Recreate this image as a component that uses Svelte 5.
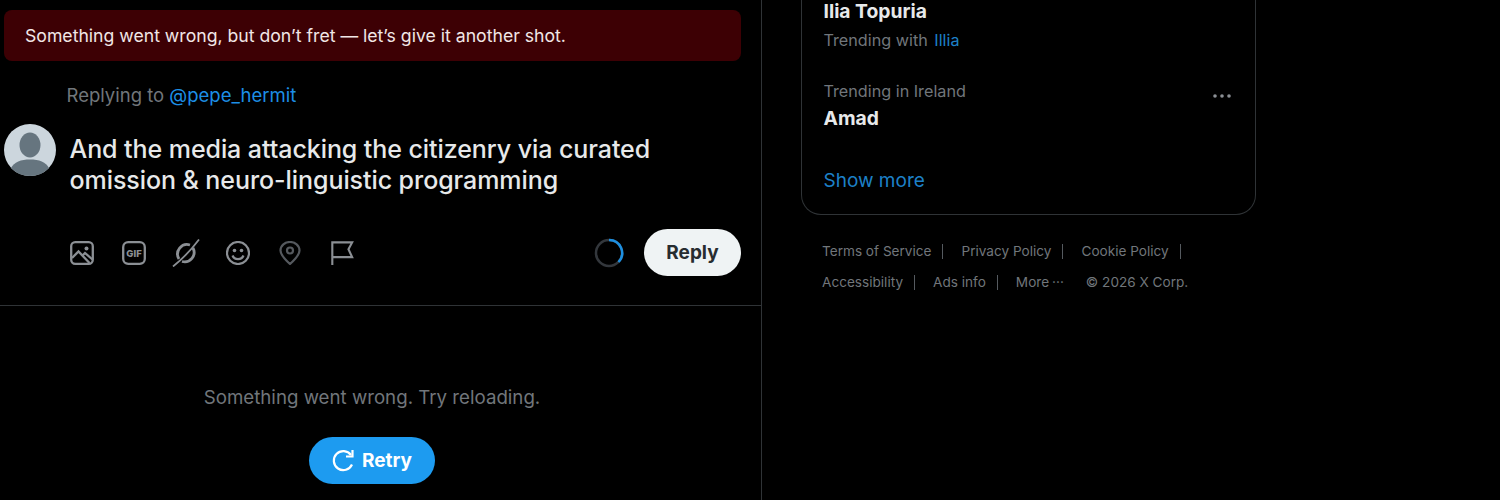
<script>
  const links = [
    { text: 'Terms of Service', sep: true },
    { text: 'Privacy Policy', sep: true },
    { text: 'Cookie Policy', sep: true },
    { text: 'Accessibility', sep: true },
    { text: 'Ads info', sep: true }
  ];
</script>

<div class="page">
  <main class="primary">
    <div class="banner">Something went wrong, but don’t fret — let’s give it another shot.</div>
    <div class="replying">Replying to <span class="blue">@pepe_hermit</span></div>

    <div class="compose">
      <svg class="avatar" viewBox="0 0 52 52" aria-hidden="true">
        <circle cx="26" cy="26" r="26" fill="#ccd6dd" />
        <ellipse cx="26" cy="21" rx="10.500" ry="12.500" fill="#66757f" />
        <path d="M7 44c3-6 10-8.500 19-8.500S42 38 45 44c-4.500 5-11.500 8-19 8S11.500 49 7 44z" fill="#66757f" />
      </svg>
      <div class="draft">And the media attacking the citizenry via curated omission &amp; neuro-linguistic programming</div>
    </div>

    <div class="toolbar">
      <div class="tools">
        <svg viewBox="0 0 24 24" fill="none" stroke="#8b8f94" stroke-width="2.300" aria-hidden="true">
          <rect x="1.200" y="1.200" width="21.600" height="21.600" rx="4" />
          <circle cx="16.500" cy="7.500" r="2" fill="#8b8f94" stroke="none" />
          <path d="M2 17l6.500-6.500 11 11.500M12.500 14.500l2.500-2.500 7.500 6.500" />
        </svg>
        <svg viewBox="0 0 24 24" fill="none" stroke="#8b8f94" stroke-width="2.300" aria-hidden="true">
          <rect x="1.200" y="1.200" width="21.600" height="21.600" rx="5" />
          <text x="12" y="15.700" class="gif">GIF</text>
        </svg>
        <svg class="wide" viewBox="0 0 28 28" fill="none" stroke="#8b8f94" aria-hidden="true">
          <path stroke-width="2.800" d="M21 9a9.500 9.500 0 0 1-11 13.500M7 20A9.500 9.500 0 0 1 18 6" />
          <path stroke-width="1.800" d="M1 27.500C9 21 20 10 27 .5" />
        </svg>
        <svg viewBox="0 0 24 24" fill="none" stroke="#8b8f94" stroke-width="2.200" aria-hidden="true">
          <circle cx="12" cy="12" r="11" />
          <circle cx="8.500" cy="9.500" r="1.800" fill="#8b8f94" stroke="none" />
          <circle cx="15.500" cy="9.500" r="1.800" fill="#8b8f94" stroke="none" />
          <path d="M6.500 14.500c1 2.500 3 3.700 5.500 3.700s4.500-1.200 5.500-3.700" />
        </svg>
        <svg viewBox="0 0 24 24" fill="none" stroke="#55595e" stroke-width="2.200" aria-hidden="true">
          <path d="M12 23c-5-4.500-9.500-9-9.500-13.500C2.500 4.500 7 1 12 1s9.500 3.500 9.500 8.500C21.500 14 17 18.500 12 23z" />
          <circle cx="12" cy="9.500" r="3" />
        </svg>
        <svg viewBox="0 0 26 26" fill="none" stroke="#8b8f94" stroke-width="2.300" aria-hidden="true">
          <path d="M2.500 26V1.500h21.500l-4 7.500 4 8.500H2.500" />
        </svg>
      </div>
      <div class="send">
        <svg class="ring" viewBox="0 0 30 30" fill="none" stroke-width="2.500" aria-hidden="true">
          <circle cx="15" cy="15" r="13" stroke="#33373c" />
          <path d="M15 2a13 13 0 0 1 9.500 22" stroke="#1d8fe0" />
        </svg>
        <button class="reply">Reply</button>
      </div>
    </div>

    <div class="failed">
      <p>Something went wrong. Try reloading.</p>
      <button class="retry">
        <svg viewBox="0 0 24 24" fill="none" stroke="#fff" stroke-width="2.200" aria-hidden="true">
          <path d="M20 15.500A9.500 9.500 0 1 1 19 6" />
          <path d="M20.500 1v6.500H14" />
        </svg>
        Retry
      </button>
    </div>
  </main>

  <aside class="side">
    <section class="card">
      <div class="trend first">
        <div class="title">Ilia Topuria</div>
        <div class="meta">Trending with <span class="blue dim gap">Illia</span></div>
      </div>
      <div class="trend second">
        <div class="meta">Trending in Ireland</div>
        <div class="title">Amad</div>
        <svg class="dots" viewBox="0 0 20 4" fill="#8b8f94" aria-hidden="true">
          <circle cx="3" cy="2" r="1.800" /><circle cx="10" cy="2" r="1.800" /><circle cx="17" cy="2" r="1.800" />
        </svg>
      </div>
      <div class="more blue dim">Show more</div>
    </section>

    <nav class="footer">
      {#each links as link}
        <span class="link">{link.text}<i class="sep"></i></span>
      {/each}
      <span class="link more-link">More<span class="ell">···</span></span>
      <span class="link">© 2026 X Corp.</span>
    </nav>
  </aside>
</div>

<style>
  :global(body) {
    background: #000;
  }

  .page {
    display: flex;
    height: 500px;
    overflow: hidden;
    background: #000;
    color: #e7e9ea;
    font-family: Inter, "Liberation Sans", sans-serif;
  }

  .primary {
    width: 761px;
    box-sizing: content-box;
    border-right: 1px solid #2f3336;
    flex: none;
  }

  .banner {
    margin: 10px 20px 0 4px;
    height: 51px;
    padding-left: 21px;
    display: flex;
    align-items: center;
    background: #3d0004;
    border-radius: 8px;
    font-size: 17.650px;
    color: #f1e6e6;
  }

  .replying {
    margin: 22px 0 0 66.500px;
    font-size: 18.500px;
    line-height: 24px;
    color: #71767b;
  }

  .blue {
    color: #1d8fe6;
  }

  .blue.dim {
    color: #1d80c8;
  }

  .compose {
    display: flex;
    margin: 17px 0 0 4px;
    gap: 13.500px;
  }

  .avatar {
    width: 52px;
    height: 52px;
    flex: none;
  }

  .draft {
    width: 640px;
    margin-top: 10px;
    font-size: 25px;
    font-weight: 500;
    letter-spacing: -0.07px;
    line-height: 31px;
    color: #e7e9ea;
  }

  .toolbar {
    display: flex;
    align-items: center;
    justify-content: space-between;
    margin-top: 33px;
    padding: 0 20px 29px 70px;
    border-bottom: 1px solid #2f3336;
  }

  .tools {
    display: flex;
    align-items: center;
    gap: 28px;
  }

  .tools svg {
    width: 24px;
    height: 24px;
    flex: none;
  }

  .tools svg.wide {
    width: 28px;
    height: 28px;
    margin: 0 -2px;
  }

  .gif {
    font: 800 9.500px Inter, sans-serif;
    fill: #8b8f94;
    stroke: none;
    text-anchor: middle;
  }

  .send {
    display: flex;
    align-items: center;
    gap: 20px;
  }

  .ring {
    width: 30px;
    height: 30px;
  }

  button {
    border: 0;
    font-family: inherit;
    font-weight: 700;
    display: flex;
    align-items: center;
    justify-content: center;
  }

  .reply {
    width: 97px;
    height: 47px;
    border-radius: 24px;
    background: #eff3f4;
    color: #272c30;
    font-size: 19px;
  }

  .failed {
    display: flex;
    flex-direction: column;
    align-items: center;
    width: 744px;
    padding-top: 79px;
  }

  .failed p {
    margin: 0;
    font-size: 18.700px;
    line-height: 26px;
    color: #71767b;
  }

  .retry {
    margin-top: 26px;
    width: 126px;
    height: 47px;
    border-radius: 24px;
    background: #1d9bf0;
    color: #fff;
    font-size: 19px;
    gap: 6px;
  }

  .retry svg {
    width: 24px;
    height: 24px;
  }

  .side {
    margin-left: 39px;
    width: 455px;
    flex: none;
  }

  .card {
    display: flow-root;
    box-sizing: border-box;
    height: 215px;
    border: 1px solid #2f3336;
    border-top: 0;
    border-radius: 0 0 20px 20px;
    padding: 0 21px 0 21.500px;
  }

  .trend {
    position: relative;
  }

  .title {
    font-size: 19.300px;
    line-height: 24px;
    font-weight: 700;
    color: #e7e9ea;
  }

  .first .title {
    margin-top: -1px;
  }

  .meta {
    font-size: 16.200px;
    line-height: 22px;
    color: #71767b;
    margin-top: 6px;
  }

  .gap {
    margin-left: 2px;
  }

  .second {
    margin-top: 29px;
  }

  .second .meta {
    margin-top: 0;
  }

  .second .title {
    margin-top: 4px;
  }

  .dots {
    position: absolute;
    right: 2px;
    top: 14px;
    width: 20px;
    height: 4px;
  }

  .more {
    margin-top: 38px;
    font-size: 19px;
    line-height: 26px;
  }

  .footer {
    display: flex;
    flex-wrap: wrap;
    width: 400px;
    margin: 21px 0 0 21px;
    font-size: 13.600px;
    line-height: 31px;
    color: #71767b;
  }

  .link {
    display: flex;
    align-items: center;
    margin-right: 19px;
  }

  .more-link {
    margin-right: 22px;
  }

  .sep {
    width: 1px;
    height: 15px;
    background: #555a5f;
    margin-left: 11px;
    margin-right: -1px;
  }

  .ell {
    margin-left: 3px;
  }
</style>
